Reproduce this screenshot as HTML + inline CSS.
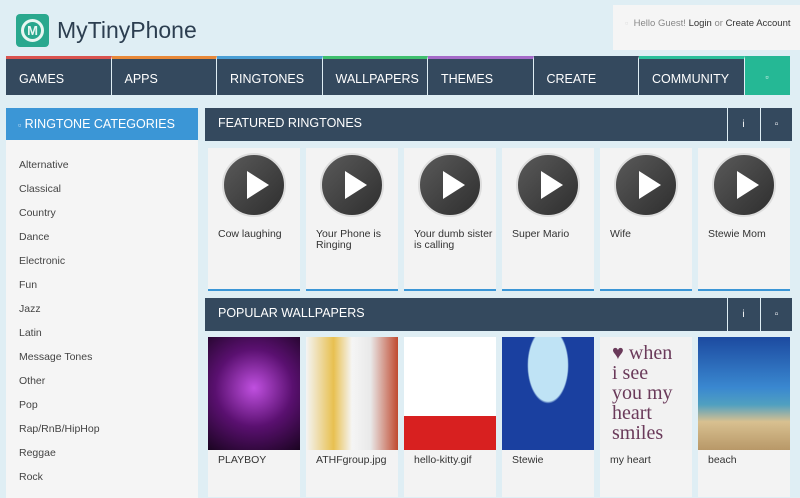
<!DOCTYPE html>
<html><head><meta charset="utf-8"><style>
*{box-sizing:border-box;margin:0;padding:0}
body{width:800px;height:495px;overflow:hidden;background:#dfeef4;font-family:"Liberation Sans",sans-serif;position:relative}
.abs{position:absolute}
.logo{left:16px;top:14px;width:33px;height:33px;border-radius:4px;background:#2aa88e}
.logo:before{content:"";position:absolute;left:5px;top:5px;width:23px;height:23px;border-radius:50%;border:3px solid #e8f7f2;box-sizing:border-box}
.logo span{position:absolute;left:0;width:33px;top:9px;text-align:center;color:#e8f7f2;font-weight:bold;font-size:13px}
.brand{left:57px;top:17px;font-size:23px;color:#2c3e50}
.login{left:613px;top:5px;width:187px;height:45px;background:#f5f5f5;font-size:9.5px;color:#888;padding:13px 0 0 12px}
.login b{font-weight:normal;color:#333}
.nav{left:6px;top:56px;height:39px;display:flex}
.nav div{width:105.5px;height:39px;background:#34495e;border-top:3px solid;border-right:1px solid #dfeef4;color:#fff;font-size:12.5px;padding:13px 0 0 13px}
.side{left:6px;top:108px;width:192px;height:390px;background:#f5f5f5}
.sh{height:32px;background:#3b96d6;color:#fff;font-size:12.5px;padding:9px 0 0 12px}
.side ul{list-style:none;padding:19px 0 0 13px;font-size:10.5px;color:#444}
.side li{height:24px}
.hdr{left:205px;width:587px;height:33px;background:#34495e;color:#fff;font-size:12.5px;padding:8px 0 0 13px}
.hb{position:absolute;top:0;width:32px;height:33px;border-left:1px solid #dfeef4;color:#fff;font-size:10px;text-align:center;padding-top:11px}
.card{position:absolute;width:92px;background:#f3f3f3;font-size:10.5px;color:#333}
.rt{top:148px;height:143px;border-bottom:2px solid #3b96d6}
.play{position:absolute;left:14px;top:5px;width:64px;height:64px;border-radius:50%;background:linear-gradient(135deg,#5a5a5a,#2e2e2e);border:2px solid #ddd}
.play:after{content:"";position:absolute;left:23px;top:16px;border-left:22px solid #fff;border-top:14px solid transparent;border-bottom:14px solid transparent}
.rt p{position:absolute;left:10px;top:81px;width:80px;line-height:11px}
.wp{top:337px;height:160px}
.wp .im{height:113px}
.wp p{position:absolute;left:10px;top:117px}
</style></head><body>
<div class="abs logo"><span>M</span></div>
<div class="abs brand">MyTinyPhone</div>
<div class="abs login"><span style="color:#ddd">▫</span>&nbsp; Hello Guest! <b>Login</b> or <b>Create Account</b></div>
<div class="abs nav">
<div style="border-top-color:#d9534f">GAMES</div>
<div style="border-top-color:#e8893a">APPS</div>
<div style="border-top-color:#4a9fd5">RINGTONES</div>
<div style="border-top-color:#3fbf6e">WALLPAPERS</div>
<div style="border-top-color:#a56bc8">THEMES</div>
<div style="border-top-color:#34495e">CREATE</div>
<div style="border-top-color:#2bbf9a">COMMUNITY</div>
<div style="width:45px;background:#25b895;border-top-color:#25b895;border-right:0;text-align:center;padding-left:0;font-size:9px">▫</div>
</div>
<div class="abs side"><div class="sh"><span style="font-size:9px;color:#cfe6f7">▫</span> RINGTONE CATEGORIES</div>
<ul><li>Alternative</li><li>Classical</li><li>Country</li><li>Dance</li><li>Electronic</li><li>Fun</li><li>Jazz</li><li>Latin</li><li>Message Tones</li><li>Other</li><li>Pop</li><li>Rap/RnB/HipHop</li><li>Reggae</li><li>Rock</li></ul></div>
<div class="abs hdr" style="top:108px">FEATURED RINGTONES<div class="hb" style="left:522px">i</div><div class="hb" style="left:555px">▫</div></div>
<div class="card rt" style="left:208px"><div class="play"></div><p>Cow laughing</p></div>
<div class="card rt" style="left:306px"><div class="play"></div><p>Your Phone is Ringing</p></div>
<div class="card rt" style="left:404px"><div class="play"></div><p>Your dumb sister is calling</p></div>
<div class="card rt" style="left:502px"><div class="play"></div><p>Super Mario</p></div>
<div class="card rt" style="left:600px"><div class="play"></div><p>Wife</p></div>
<div class="card rt" style="left:698px"><div class="play"></div><p>Stewie Mom</p></div>
<div class="abs hdr" style="top:298px">POPULAR WALLPAPERS<div class="hb" style="left:522px">i</div><div class="hb" style="left:555px">▫</div></div>
<div class="card wp" style="left:208px"><div class="im" style="background:radial-gradient(circle at 50% 45%,#c050e0,#5a1070 50%,#1a0420)"></div><p>PLAYBOY</p></div>
<div class="card wp" style="left:306px"><div class="im" style="background:linear-gradient(90deg,#f4f4f4,#e8c050 30%,#f5f5f5 50%,#e9e9e9 70%,#c04a30)"></div><p>ATHFgroup.jpg</p></div>
<div class="card wp" style="left:404px"><div class="im" style="background:linear-gradient(#fff 0,#fff 70%,#d82020 70%)"></div><p>hello-kitty.gif</p></div>
<div class="card wp" style="left:502px"><div class="im" style="background:radial-gradient(ellipse at 50% 25%,#bfe3f5 30%,#1a40a0 32%)"></div><p>Stewie</p></div>
<div class="card wp" style="left:600px"><div class="im" style="background:#f2f2f2;color:#6a3a5a;font-size:20px;line-height:20px;padding:6px 0 0 12px;font-family:'Liberation Serif',serif">♥ when<br>i see<br>you my<br>heart<br>smiles</div><p>my heart</p></div>
<div class="card wp" style="left:698px"><div class="im" style="background:linear-gradient(#1c4aa0,#3a88d0 45%,#50a0c0 60%,#d8c090 75%,#b89868)"></div><p>beach</p></div>
</body></html>
